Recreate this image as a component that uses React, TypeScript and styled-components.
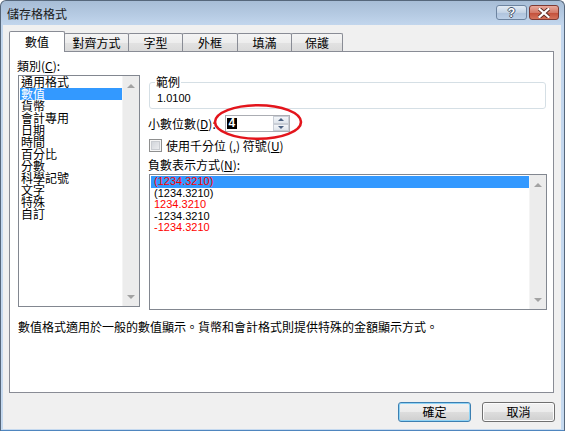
import styled, { createGlobalStyle } from "styled-components";

const GlobalStyle = createGlobalStyle`
  html, body {
    margin: 0;
    padding: 0;
    background: #ffffff;
  }
  body {
    font-family: "Liberation Sans", "Noto Sans CJK TC", sans-serif;
    font-size: 12px;
    color: #000;
    overflow: hidden;
  }
`;

const CJK = `"Noto Sans CJK TC", "Liberation Sans", sans-serif`;

const tabs = [
  { label: "數值", w: 56, active: true },
  { label: "對齊方式", w: 65 },
  { label: "字型", w: 55 },
  { label: "外框", w: 56 },
  { label: "填滿", w: 55 },
  { label: "保護", w: 52 },
];

const categories = [
  "通用格式",
  "數值",
  "貨幣",
  "會計專用",
  "日期",
  "時間",
  "百分比",
  "分數",
  "科學記號",
  "文字",
  "特殊",
  "自訂",
];

const negatives = [
  { text: "(1234.3210)", red: true },
  { text: "(1234.3210)", red: false },
  { text: "1234.3210", red: true },
  { text: "-1234.3210", red: false },
  { text: "-1234.3210", red: true },
];

const App = () => {
  return (
    <>
      <GlobalStyle />
      <Window>
        <TitleBar>
          <Title>儲存格格式</Title>
          <Controls>
            <HelpButton>?</HelpButton>
            <CloseButton>
              <svg width="12" height="10" viewBox="0 0 12 10">
                <path
                  d="M1.5 1 L10.5 9 M10.5 1 L1.5 9"
                  stroke="#5a2a22"
                  strokeWidth="4"
                  strokeLinecap="square"
                />
                <path
                  d="M1.5 1 L10.5 9 M10.5 1 L1.5 9"
                  stroke="#ffffff"
                  strokeWidth="2.2"
                  strokeLinecap="square"
                />
              </svg>
            </CloseButton>
          </Controls>
        </TitleBar>

        <Client>
          <TabRow>
            {tabs.map((t) => (
              <Tab key={t.label} $w={t.w} $active={t.active}>
                {t.label}
              </Tab>
            ))}
          </TabRow>

          <Panel>
            <Body>
              <LeftCol>
                <Label>
                  類別(<u>C</u>):
                </Label>
                <CategoryList>
                  <Items>
                    {categories.map((c, i) => (
                      <CategoryItem key={c} $selected={i === 1}>
                        {c}
                      </CategoryItem>
                    ))}
                  </Items>
                  <Scrollbar>
                    <ArrowUp />
                    <ArrowDown />
                  </Scrollbar>
                </CategoryList>
              </LeftCol>

              <RightCol>
                <Sample>
                  <SampleLegend>範例</SampleLegend>
                  <SampleValue>1.0100</SampleValue>
                </Sample>

                <SpinRow>
                  <SpinLabel>
                    小數位數(<u>D</u>):
                  </SpinLabel>
                  <SpinBox>
                    <SpinValue>4</SpinValue>
                    <SpinButtons>
                      <SpinBtn>
                        <SpinUp />
                      </SpinBtn>
                      <SpinBtn>
                        <SpinDown />
                      </SpinBtn>
                    </SpinButtons>
                  </SpinBox>
                  <Circle width="90" height="38" viewBox="0 0 90 38">
                    <ellipse
                      cx="45"
                      cy="19"
                      rx="43"
                      ry="16.8"
                      fill="none"
                      stroke="#e3151c"
                      strokeWidth="2.6"
                    />
                  </Circle>
                </SpinRow>

                <CheckRow>
                  <CheckBox />
                  <CheckText>
                    使用千分位 (,) 符號(<u>U</u>)
                  </CheckText>
                </CheckRow>

                <NegLabel>
                  負數表示方式(<u>N</u>):
                </NegLabel>
                <NegList>
                  <Items>
                    {negatives.map((n, i) => (
                      <NegItem key={i} $red={n.red} $selected={i === 0}>
                        {n.text}
                      </NegItem>
                    ))}
                  </Items>
                  <Scrollbar>
                    <ArrowUp />
                    <ArrowDown />
                  </Scrollbar>
                </NegList>
              </RightCol>
            </Body>

            <Description>
              數值格式適用於一般的數值顯示。貨幣和會計格式則提供特殊的金額顯示方式。
            </Description>
          </Panel>

          <ButtonRow>
            <DialogButton $default>確定</DialogButton>
            <DialogButton>取消</DialogButton>
          </ButtonRow>
        </Client>
      </Window>
    </>
  );
};

const Window = styled.div`
  width: 565px;
  height: 431px;
  box-sizing: border-box;
  display: flex;
  flex-direction: column;
  border: 1px solid #56677b;
  border-bottom-color: #4f86bf;
  border-radius: 6px 6px 0 0;
  background: linear-gradient(#a7bdd6 0px, #b6cbe3 14px, #c2d6ed 24px, #c5d9ef 100%);
  overflow: hidden;
`;

const TitleBar = styled.div`
  height: 24px;
  flex: none;
  display: flex;
  align-items: flex-start;
  justify-content: space-between;
  padding: 0 5px 0 6px;
`;

const Title = styled.div`
  font-family: ${CJK};
  font-size: 12px;
  line-height: 12px;
  margin-top: 7px;
  color: #1a1a1a;
`;

const Controls = styled.div`
  display: flex;
  gap: 2px;
  margin-top: 4px;
`;

const HelpButton = styled.div`
  width: 31px;
  height: 15px;
  box-sizing: border-box;
  border: 1px solid #6d84a0;
  border-radius: 3px;
  background: linear-gradient(#e2ebf5 0%, #c3d3e6 50%, #afc3dc 51%, #bcd0e8 100%);
  display: flex;
  align-items: center;
  justify-content: center;
  font-family: "Liberation Sans", sans-serif;
  font-weight: bold;
  font-size: 12px;
  line-height: 12px;
  color: #ffffff;
  text-shadow: 1px 0 #44546a, -1px 0 #44546a, 0 1px #44546a, 0 -1px #44546a;
`;

const CloseButton = styled.div`
  width: 30px;
  height: 15px;
  box-sizing: border-box;
  border: 1px solid #7e3a33;
  border-radius: 3px;
  background: linear-gradient(#e9a99c 0%, #d47a68 50%, #c24d38 51%, #d5735b 100%);
  display: flex;
  align-items: center;
  justify-content: center;
`;

const Client = styled.div`
  flex: 1;
  display: flex;
  flex-direction: column;
  margin: 0 3px 1px 2px;
  padding: 6px 7px 0 6px;
  background: #f0f0f0;
`;

const TabRow = styled.div`
  display: flex;
  align-items: flex-end;
  height: 20px;
  position: relative;
  z-index: 2;
`;

const Tab = styled.div<{ $w: number; $active?: boolean }>`
  width: ${(p) => p.$w}px;
  height: ${(p) => (p.$active ? 21 : 18)}px;
  box-sizing: border-box;
  margin-left: -1px;
  margin-bottom: ${(p) => (p.$active ? -1 : 0)}px;
  &:first-child {
    margin-left: 0;
  }
  border: 1px solid #898c95;
  border-bottom: none;
  border-radius: 2px 2px 0 0;
  background: ${(p) =>
    p.$active
      ? "#ffffff"
      : "linear-gradient(#f4f4f4 0%, #ededed 50%, #e2e2e2 51%, #dadada 100%)"};
  position: relative;
  z-index: ${(p) => (p.$active ? 3 : 1)};
  display: flex;
  align-items: center;
  justify-content: center;
  padding-bottom: ${(p) => (p.$active ? 1 : 0)}px;
  font-family: ${CJK};
  font-size: 12px;
  line-height: 12px;
`;

const Panel = styled.div`
  height: 342px;
  box-sizing: border-box;
  flex: none;
  border: 1px solid #898c95;
  background: #ffffff;
  padding: 8px 6px 0 7px;
  position: relative;
  z-index: 1;
`;

const Body = styled.div`
  display: flex;
  gap: 8px;
  align-items: flex-start;
`;

const LeftCol = styled.div`
  width: 123px;
  display: flex;
  flex-direction: column;
`;

const Label = styled.div`
  font-family: ${CJK};
  font-size: 12px;
  line-height: 12px;
  height: 12px;
`;

const ListBox = styled.div`
  box-sizing: border-box;
  border: 1px solid #828790;
  background: #ffffff;
  display: flex;
  margin-left: 1px;
`;

const CategoryList = styled(ListBox)`
  width: 122px;
  height: 232px;
  margin-top: 3px;
`;

const Items = styled.div`
  flex: 1;
  min-width: 0;
  padding-left: 1px;
`;

const CategoryItem = styled.div<{ $selected?: boolean }>`
  height: 12px;
  line-height: 12px;
  font-family: ${CJK};
  font-size: 12px;
  padding-left: 1px;
  background: ${(p) => (p.$selected ? "#3399ff" : "transparent")};
  color: ${(p) => (p.$selected ? "#ffffff" : "#000000")};
  white-space: nowrap;
`;

const Scrollbar = styled.div`
  width: 17px;
  flex: none;
  box-sizing: border-box;
  background: #ececec;
  border-left: 1px solid #f4f4f4;
  display: flex;
  flex-direction: column;
  justify-content: space-between;
  align-items: center;
  padding: 8px 0 7px;
`;

const ArrowUp = styled.div`
  width: 0;
  height: 0;
  border-left: 4px solid transparent;
  border-right: 4px solid transparent;
  border-bottom: 4px solid #a2a2a2;
`;

const ArrowDown = styled.div`
  width: 0;
  height: 0;
  border-left: 4px solid transparent;
  border-right: 4px solid transparent;
  border-top: 4px solid #a2a2a2;
`;

const RightCol = styled.div`
  width: 399px;
  display: flex;
  flex-direction: column;
`;

const Sample = styled.fieldset`
  margin: 16px 1px 0 1px;
  padding: 0 5px 4px 5px;
  border: 1px solid #d5dfe5;
  border-radius: 3px;
  min-width: 0;
`;

const SampleLegend = styled.legend`
  padding: 0 1px;
  font-family: ${CJK};
  font-size: 12px;
  line-height: 12px;
`;

const SampleValue = styled.div`
  margin: 4px 0 0 2px;
  font-family: "Liberation Sans", sans-serif;
  font-size: 11px;
  line-height: 12px;
`;

const SpinRow = styled.div`
  margin-top: 6px;
  height: 17px;
  display: flex;
  align-items: center;
  position: relative;
`;

const SpinLabel = styled.div`
  width: 77px;
  font-family: ${CJK};
  font-size: 12px;
  line-height: 12px;
  white-space: nowrap;
`;

const SpinBox = styled.div`
  width: 65px;
  height: 17px;
  box-sizing: border-box;
  border: 1px solid #abadb3;
  background: #ffffff;
  display: flex;
  align-items: center;
  justify-content: space-between;
`;

const SpinValue = styled.span`
  margin-left: 1px;
  background: #000000;
  color: #ffffff;
  font-family: "Liberation Sans", sans-serif;
  font-weight: bold;
  font-size: 12px;
  line-height: 11px;
  height: 11px;
  padding: 0 1.5px;
`;

const SpinButtons = styled.div`
  width: 16px;
  height: 15px;
  display: flex;
  flex-direction: column;
`;

const SpinBtn = styled.div`
  flex: 1;
  box-sizing: border-box;
  border: 1px solid #c9ced6;
  background: linear-gradient(#f4f6f9, #dfe5ec);
  display: flex;
  align-items: center;
  justify-content: center;
`;

const SpinUp = styled.div`
  width: 0;
  height: 0;
  border-left: 3px solid transparent;
  border-right: 3px solid transparent;
  border-bottom: 3px solid #4c6282;
`;

const SpinDown = styled.div`
  width: 0;
  height: 0;
  border-left: 3px solid transparent;
  border-right: 3px solid transparent;
  border-top: 3px solid #4c6282;
`;

const Circle = styled.svg`
  position: absolute;
  left: 65px;
  top: -12px;
  pointer-events: none;
`;

const CheckRow = styled.div`
  margin-top: 7px;
  height: 13px;
  display: flex;
  align-items: center;
  gap: 4px;
  padding-left: 1px;
`;

const CheckBox = styled.div`
  width: 13px;
  height: 13px;
  box-sizing: border-box;
  border: 1px solid #8e8f8f;
  background: linear-gradient(135deg, #cbcfd5, #f1f2f4);
  box-shadow: inset 0 0 0 1px #f6f6f6, inset 0 0 0 2px #c9ccd1;
`;

const CheckText = styled.div`
  font-family: ${CJK};
  font-size: 12px;
  line-height: 12px;
  white-space: nowrap;
`;

const NegLabel = styled(Label)`
  margin-top: 7px;
`;

const NegList = styled(ListBox)`
  width: 398px;
  height: 136px;
  margin-top: 3px;
`;

const NegItem = styled.div<{ $red?: boolean; $selected?: boolean }>`
  height: 11.5px;
  line-height: 11.5px;
  font-family: "Liberation Sans", sans-serif;
  font-size: 11px;
  padding-left: 3px;
  background: ${(p) => (p.$selected ? "#3399ff" : "transparent")};
  color: ${(p) => (p.$red ? "#ff0000" : "#000000")};
  &:first-child {
    margin-top: 1px;
  }
`;

const Description = styled.div`
  margin-top: 11px;
  padding-left: 1px;
  font-family: ${CJK};
  font-size: 12px;
  line-height: 12px;
  white-space: nowrap;
`;

const ButtonRow = styled.div`
  display: flex;
  justify-content: flex-end;
  gap: 11px;
  margin-top: 9px;
  margin-right: -1px;
`;

const DialogButton = styled.div<{ $default?: boolean }>`
  width: 73px;
  height: 20px;
  box-sizing: border-box;
  border: 1px solid ${(p) => (p.$default ? "#3c7fb1" : "#707070")};
  border-radius: 3px;
  background: linear-gradient(#f2f2f2 0%, #ebebeb 50%, #dddddd 51%, #cfcfcf 100%);
  box-shadow: ${(p) => (p.$default ? "inset 0 0 0 1px #8fd3f5" : "inset 0 0 0 1px #fcfcfc")};
  display: flex;
  align-items: center;
  justify-content: center;
  font-family: ${CJK};
  font-size: 12px;
  line-height: 12px;
`;

export default App;
